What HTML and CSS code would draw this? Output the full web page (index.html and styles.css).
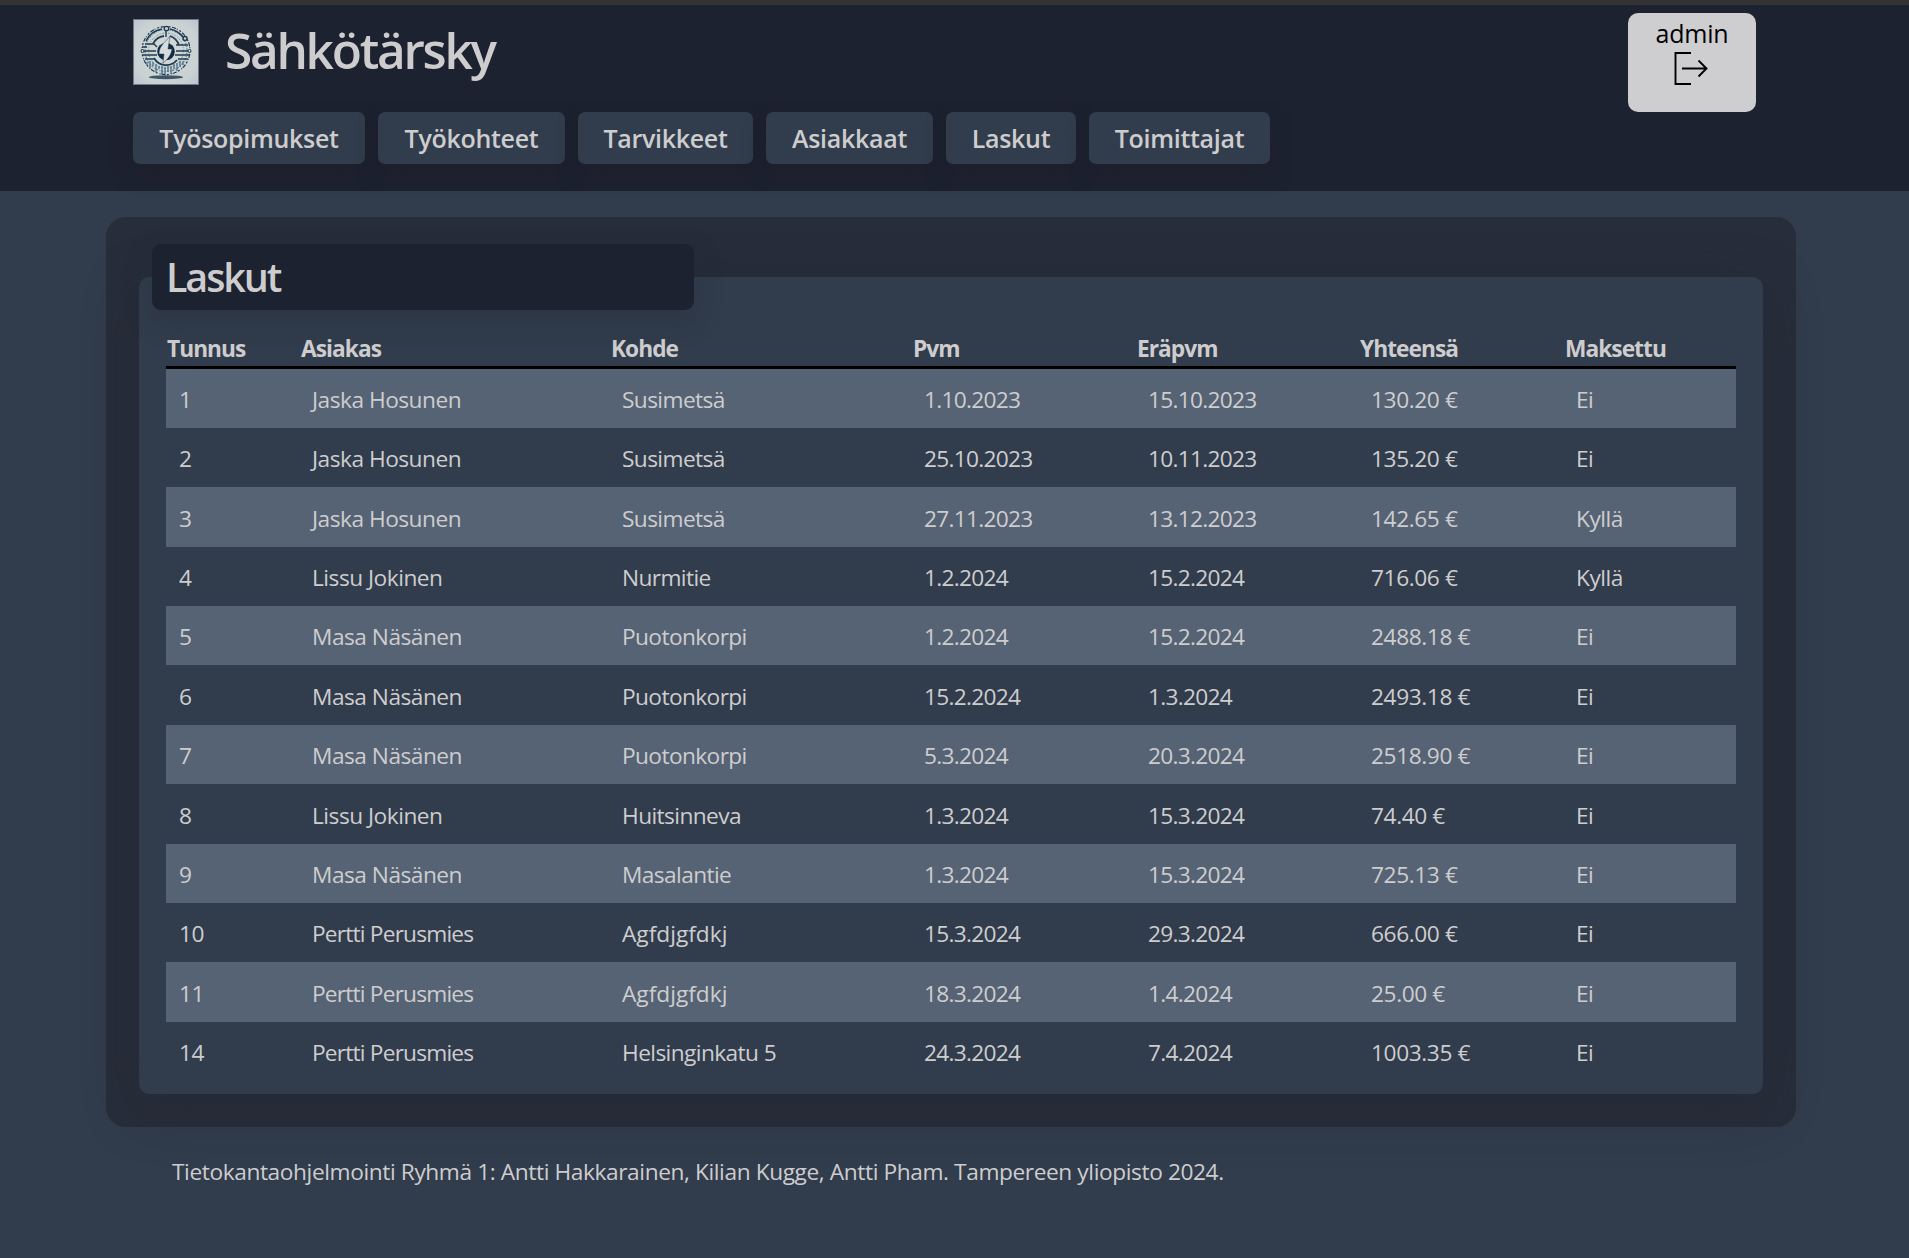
FILE: index.html
```html
<!DOCTYPE html>
<html lang="fi">
<head>
<meta charset="utf-8">
<title>Sähkötärsky</title>
<link rel="stylesheet" href="styles.css">
</head>
<body>
<header class="header">
  <div class="masthead">
    <div class="brand">
      <svg class="logo" viewBox="0 0 66 66">
        <defs>
          <radialGradient id="paper" cx=".5" cy=".5" r=".72"><stop offset="0" stop-color="#d3d9d8"/><stop offset=".7" stop-color="#c9d1d2"/><stop offset="1" stop-color="#b9c4d0"/></radialGradient>
        </defs>
        <rect x=".5" y=".5" width="65" height="65" fill="url(#paper)" stroke="#707b88"/>
        <ellipse cx="33" cy="58.2" rx="17" ry="2" fill="#3f5668"/>
        <g fill="none" stroke="#1f3c52">
          <circle cx="33" cy="31.500" r="24" stroke-width="1.200" stroke-dasharray="2 1.500 4 1 1 2"/>
          <circle cx="33" cy="31.500" r="21" stroke="#5f7f95" stroke-width="1.200" stroke-dasharray="1 1.500 2 1"/>
          <path d="M13 22a22 22 0 0 1 16-12M37 10a22 22 0 0 1 13 8" stroke-width="1.600"/>
          <circle cx="33" cy="31.500" r="17.500" stroke="#7f98a8" stroke-width="1" stroke-dasharray="2 1.500 1 1.500"/>
          <path d="M20 25a14 14 0 0 1 11-8M37 17a15 15 0 0 1 9 9M21 39a14 14 0 0 0 23 2" stroke-width="1.800"/>
          <path d="M33 12v6M9 32h14M43 32h14M10 36h14M42 36h14M9 28h5M12 25h9l3 3M43 26h12M12 40h9M45 40h10" stroke-width="1.400"/>
          <path d="M14 43v3M17 42v7M20 43v4M23 45v8M26 47v3M29 47v8M32 48v7M35 47v6M38 47v8M41 45v5M44 44v8M47 42v6M50 42v4" stroke="#456c86" stroke-width="1.300"/>
          <circle cx="33.500" cy="9.500" r="2.200" fill="#d3d9d8" stroke-width="1.300"/>
          <circle cx="52" cy="19.500" r="2" fill="#c9d1d2" stroke-width="1.500"/>
          <circle cx="9.500" cy="32" r="1.500" fill="#d3d9d8"/>
          <circle cx="56.500" cy="32" r="1.500" fill="#d3d9d8"/>
        </g>
        <circle cx="33" cy="32.500" r="8.800" fill="#102c42"/>
        <path d="M37 17c-3 5-11 9-11 18h5l-1 9c5-4 8-8 9-14h-4z" fill="#d6dcdb" stroke="#233f55" stroke-width=".5"/>
      </svg>
      <h1 class="brand-name">Sähkötärsky</h1>
    </div>
    <button class="user">
      <span class="user-name">admin</span>
      <svg class="logout" viewBox="0 0 36 34" fill="none" stroke="#000" stroke-width="1.900"><path d="M18 1H2.500v31H18" /><path d="M9 16.500h24M25.500 8.500l8 8-8 8"/></svg>
    </button>
  </div>
  <nav class="nav">
    <a class="nav-link contracts">Työsopimukset</a>
    <a class="nav-link sites">Työkohteet</a>
    <a class="nav-link supplies">Tarvikkeet</a>
    <a class="nav-link customers">Asiakkaat</a>
    <a class="nav-link invoices">Laskut</a>
    <a class="nav-link suppliers">Toimittajat</a>
  </nav>
</header>
<main class="panel">
  <h2 class="panel-title">Laskut</h2>
  <section class="card">
    <table class="table">
      <colgroup><col class="c-id"><col class="c-customer"><col class="c-site"><col class="c-date"><col class="c-due"><col class="c-total"><col></colgroup>
      <thead><tr><th>Tunnus</th><th>Asiakas</th><th>Kohde</th><th>Pvm</th><th>Eräpvm</th><th>Yhteensä</th><th>Maksettu</th></tr></thead>
      <tbody>
        <tr><td>1</td><td>Jaska Hosunen</td><td>Susimetsä</td><td>1.10.2023</td><td>15.10.2023</td><td>130.20 €</td><td>Ei</td></tr>
        <tr><td>2</td><td>Jaska Hosunen</td><td>Susimetsä</td><td>25.10.2023</td><td>10.11.2023</td><td>135.20 €</td><td>Ei</td></tr>
        <tr class="tall"><td>3</td><td>Jaska Hosunen</td><td>Susimetsä</td><td>27.11.2023</td><td>13.12.2023</td><td>142.65 €</td><td>Kyllä</td></tr>
        <tr><td>4</td><td>Lissu Jokinen</td><td>Nurmitie</td><td>1.2.2024</td><td>15.2.2024</td><td>716.06 €</td><td>Kyllä</td></tr>
        <tr><td>5</td><td>Masa Näsänen</td><td>Puotonkorpi</td><td>1.2.2024</td><td>15.2.2024</td><td>2488.18 €</td><td>Ei</td></tr>
        <tr class="tall"><td>6</td><td>Masa Näsänen</td><td>Puotonkorpi</td><td>15.2.2024</td><td>1.3.2024</td><td>2493.18 €</td><td>Ei</td></tr>
        <tr><td>7</td><td>Masa Näsänen</td><td>Puotonkorpi</td><td>5.3.2024</td><td>20.3.2024</td><td>2518.90 €</td><td>Ei</td></tr>
        <tr class="tall"><td>8</td><td>Lissu Jokinen</td><td>Huitsinneva</td><td>1.3.2024</td><td>15.3.2024</td><td>74.40 €</td><td>Ei</td></tr>
        <tr><td>9</td><td>Masa Näsänen</td><td>Masalantie</td><td>1.3.2024</td><td>15.3.2024</td><td>725.13 €</td><td>Ei</td></tr>
        <tr><td>10</td><td class="tight">Pertti Perusmies</td><td class="wide">Agfdjgfdkj</td><td>15.3.2024</td><td>29.3.2024</td><td>666.00 €</td><td>Ei</td></tr>
        <tr class="tall"><td>11</td><td class="tight">Pertti Perusmies</td><td class="wide">Agfdjgfdkj</td><td>18.3.2024</td><td>1.4.2024</td><td>25.00 €</td><td>Ei</td></tr>
        <tr><td>14</td><td class="tight">Pertti Perusmies</td><td>Helsinginkatu 5</td><td>24.3.2024</td><td>7.4.2024</td><td>1003.35 €</td><td>Ei</td></tr>
      </tbody>
    </table>
  </section>
</main>
<footer class="footer">Tietokantaohjelmointi Ryhmä 1: Antti Hakkarainen, Kilian Kugge, Antti Pham. Tampereen yliopisto 2024.</footer>
</body>
</html>
```
FILE: styles.css
```css
* { box-sizing: border-box; }
body {
  margin: 0;
  height: 1258px;
  overflow: hidden;
  background: #313c4c;
  color: #cecdce;
  font: 22.7px/30px "Open Sans", "Noto Sans", sans-serif;
  letter-spacing: -0.4px;
}
.header {
  height: 191px;
  border-top: 5px solid #333;
  background: #1d2230;
  padding: 8px 153px 0 133px;
}
.masthead { display: flex; justify-content: space-between; height: 99px; }
.brand { display: flex; align-items: flex-start; gap: 26px; padding-top: 6px; }
.logo { width: 66px; height: 66px; }
.brand-name { margin: 0; font-size: 49.5px; line-height: 62px; font-weight: 600; letter-spacing: -2.25px; }
.user {
  display: flex;
  flex-direction: column;
  align-items: center;
  width: 128px;
  height: 99px;
  padding: 4px 0 0;
  border: 0;
  border-radius: 10px;
  background: #cecdd0;
  color: #000;
  font: inherit;
}
.user-name { font-size: 25px; line-height: 32px; font-weight: 500; letter-spacing: -0.2px; }
.logout { width: 36px; height: 34px; margin: 3px 2px 0 0; }
.nav { display: flex; gap: 13px; }
.nav-link {
  height: 52px;
  border-radius: 7px;
  background: #313c4c;
  box-shadow: 0 10px 20px rgba(29, 29, 40, .5);
  font-size: 25px;
  font-weight: 600;
  line-height: 53px;
  letter-spacing: -0.3px;
  text-align: center;
}
.contracts { width: 232px; }
.sites { width: 187px; }
.supplies { width: 175px; }
.customers { width: 167px; }
.invoices { width: 130px; }
.suppliers { width: 181px; }
.panel {
  width: 1690px;
  height: 910px;
  margin: 26px 0 0 106px;
  padding: 27px 33px 33px;
  border-radius: 20px;
  background: #272d3a;
}
.panel-title {
  position: relative;
  width: 542px;
  height: 66px;
  margin: 0 0 -33px 13px;
  padding-left: 14px;
  border-radius: 9px;
  background: #1d2230;
  box-shadow: 0 10px 26px rgba(38, 44, 56, .4);
  font-size: 39.5px;
  font-weight: 600;
  line-height: 67px;
  letter-spacing: -2.1px;
}
.card {
  height: 817px;
  padding: 57px 27px 0;
  border-radius: 10px;
  background: #313c4c;
  box-shadow: 0 14px 54px rgba(34, 38, 48, .4);
}
.table { width: 1570px; table-layout: fixed; border-collapse: separate; border-spacing: 0; }
.c-id { width: 134px; }
.c-customer { width: 310px; }
.c-site { width: 302px; }
.c-date { width: 224px; }
.c-due { width: 223px; }
.c-total { width: 206px; }
th { height: 35px; padding: 0 1px 2px; border-bottom: 3px solid #000; text-align: left; font-weight: 700; letter-spacing: -0.95px; }
th:last-child { padding-left: 0; }
td { height: 59px; padding: 3px 12px 0; letter-spacing: -0.5px; }
td:nth-child(1) { padding-left: 13px; }
td:nth-child(3) { letter-spacing: -0.6px; }
td:nth-child(4), td:nth-child(5) { letter-spacing: -0.72px; }
td:nth-child(6) { letter-spacing: -0.4px; }
td:nth-child(7) { padding-left: 11px; }
td.tight { letter-spacing: -0.8px; }
td.wide { letter-spacing: 0; }
.tall td { height: 60px; }
tbody tr:nth-child(odd) { background: #566375; }
.footer { padding: 30px 0 0 172px; }
```
